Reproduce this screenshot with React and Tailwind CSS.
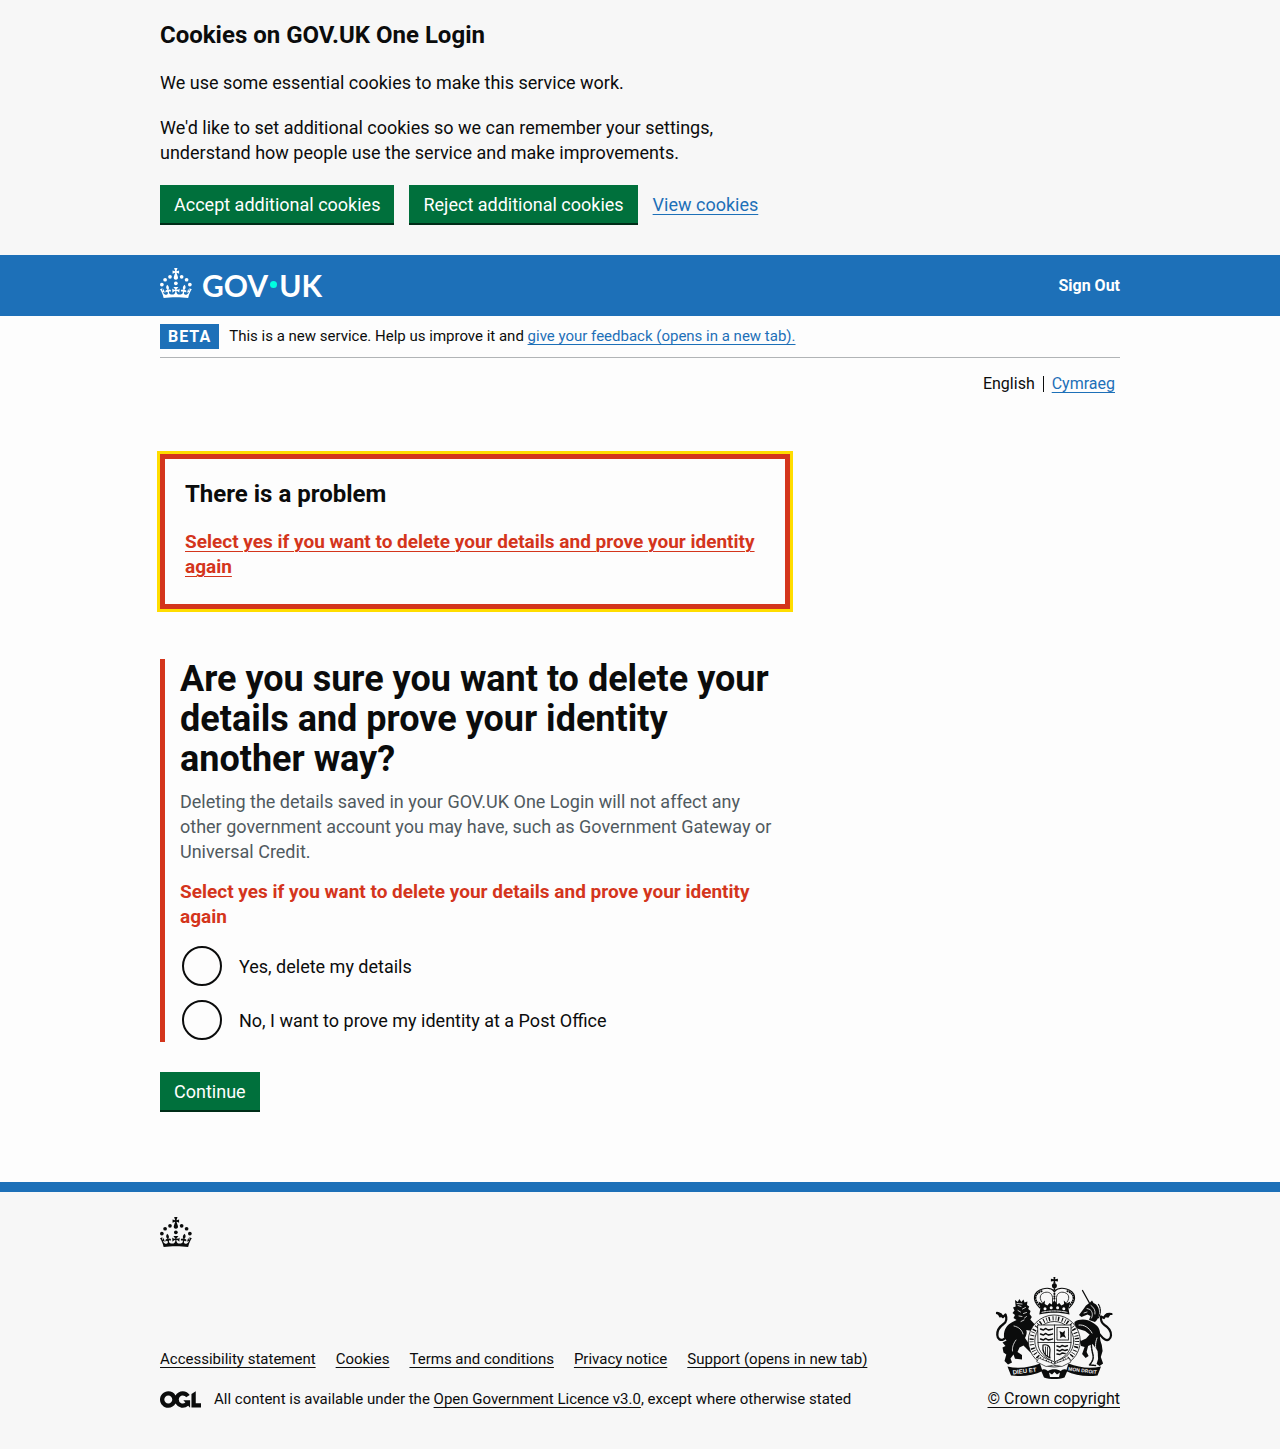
import React from 'react'

const linkBlue = 'text-[#1d70b8] underline decoration-1 underline-offset-[3px]'
const linkDark = 'text-[#0b0c0c] underline decoration-1 underline-offset-[3px]'
const container = 'mx-auto w-full max-w-[960px]'
const button =
  'h-[38px] bg-[#00703c] px-[14px] text-lg leading-[19px] text-white shadow-[0_2px_0_#002d18] cursor-pointer'

function CrownShape() {
  return (
    <g>
      <circle cx="20" cy="17.6" r="3.7" />
      <circle cx="10.2" cy="23.5" r="3.7" />
      <circle cx="3.7" cy="33.2" r="3.7" />
      <circle cx="31.7" cy="30.6" r="3.7" />
      <circle cx="43.3" cy="17.6" r="3.7" />
      <circle cx="53.2" cy="23.5" r="3.7" />
      <circle cx="59.7" cy="33.2" r="3.7" />
      <path d="M33.1,9.8c.2-.1.3-.3.5-.5l4.6,2.4v-6.8l-4.6,1.5c-.1-.2-.3-.3-.5-.5l1.9-5.9h-6.7l1.9,5.9c-.2.1-.3.3-.5.5l-4.6-1.5v6.8l4.6-2.4c.1.2.3.3.5.5l-2.6,8c-.9,2.8,1.2,5.7,4.1,5.7h0c3,0,5.1-2.9,4.1-5.7l-2.6-8ZM37,37.9s-3.4,3.8-4.1,6.1c2.2,0,4.2-.5,6.4-2.8l-.7,8.5c-2-2.8-4.4-4.1-5.7-3.8.1,3.1.5,6.7,5.8,7.2,3.7.3,6.7-1.5,7-3.8.4-2.6-2-4.3-3.7-1.6-1.4-4.5,2.4-6.1,4.9-3.2-1.9-4.5-1.8-7.7,2.4-10.9,3,4,2.6,7.3-1.2,11.1,2.4-1.3,6.2,0,4,4.6-1.2-2.8-3.7-2.2-4.2.2-.3,1.7.7,3.7,3,4.2,1.9.3,4.7-.9,7-5.9-1.3,0-2.4.7-3.9,1.7l2.4-8c.6,2.3,1.4,3.7,2.2,4.5.6-1.6.5-2.8,0-5.3l5,1.8c-2.6,3.6-5.2,8.7-7.3,17.5-7.4-1.1-15.7-1.7-24.5-1.7h0c-8.8,0-17.1.6-24.5,1.7-2.1-8.9-4.7-13.9-7.3-17.5l5-1.8c-.5,2.5-.6,3.7,0,5.3.8-.8,1.6-2.3,2.2-4.5l2.4,8c-1.5-1-2.6-1.7-3.9-1.7,2.3,5,5.2,6.2,7,5.9,2.3-.4,3.3-2.4,3-4.2-.5-2.4-3-3.1-4.2-.2-2.2-4.6,1.6-6,4-4.6-3.7-3.7-4.2-7.1-1.2-11.1,4.2,3.2,4.3,6.4,2.4,10.9,2.5-2.8,6.3-1.3,4.9,3.2-1.8-2.7-4.1-1-3.7,1.6.3,2.3,3.3,4.1,7,3.8,5.4-.5,5.7-4.2,5.8-7.2-1.3-.2-3.7,1-5.7,3.8l-.7-8.5c2.2,2.3,4.2,2.7,6.4,2.8-.7-2.3-4.1-6.1-4.1-6.1h10.6,0Z" />
    </g>
  )
}

function GovUkLogo() {
  return (
    <span className="flex items-start pb-1 font-['Lato',sans-serif] text-[30px] leading-[30px] font-bold">
      <svg width="32" height="30" viewBox="0 0 64 60" fill="currentColor" className="mr-[10px]" aria-hidden="true">
        <CrownShape />
      </svg>
      <span className="flex items-center pt-0.5">
        <span>GOV</span>
        <span className="mx-0.5 size-[7px] rounded-full bg-[#00ffe0]" />
        <span>UK</span>
      </span>
    </span>
  )
}

function OglLogo() {
  return (
    <svg width="41" height="17" viewBox="0 0 483.2 195.7" fill="currentColor" className="mr-[13px] shrink-0" aria-hidden="true">
      <path d="M421.5 142.8V.1l-50.7 32.3v161.1h112.4v-50.7zm-122.3-9.6A47.12 47.12 0 0 1 221 97.8c0-26 21.1-47.1 47.1-47.1 16.7 0 31.4 8.7 39.7 21.8l42.7-27.2A97.63 97.63 0 0 0 268.1 0c-36.5 0-68.3 20.1-85.1 49.7A98 98 0 0 0 97.8 0C43.9 0 0 43.9 0 97.8s43.9 97.8 97.8 97.8c36.5 0 68.3-20.1 85.1-49.7a97.76 97.76 0 0 0 149.6 25.4l19.4 22.2h3v-87.8h-80l24.3 27.5zM97.8 145c-26 0-47.1-21.1-47.1-47.1s21.1-47.1 47.1-47.1 47.1 21.1 47.1 47.1S123.8 145 97.8 145" />
    </svg>
  )
}

function CoatOfArms() {
  return (
    <svg width="124" height="106" viewBox="0 0 124 106" fill="#0b0c0c" stroke="#0b0c0c" strokeLinecap="round" strokeLinejoin="round" strokeWidth="0" aria-hidden="true">
      {/* cross, orb and imperial crown */}
      <path d="M61.400 3h2l-.3 2.300 2.800-.5v2.800l-2.800-.5.4 2.600h-2.200l.4-2.600-2.800.5V4.800l2.800.5z" />
      <circle cx="62.400" cy="11.800" r="2.500" />
      <g fill="none" strokeWidth="1.100">
        <path d="M48 34C39 26 41.500 17.500 50.500 15c5.500-1.500 9.500-.3 11.900 2.300C65 14.700 69 13.500 74.500 15 83.500 17.500 86 26 77 34" />
        <path d="M51.500 30c-5-5-4-10 1-11.500 4-1 7.500.5 8 5V31M73.500 30c5-5 4-10-1-11.500-4-1-7.500.5-8 5V31" strokeWidth=".8" />
        <path d="M46.700 30.500C41 24.500 43.500 18.500 50.500 17M78.300 30.500C84 24.500 81.500 18.500 74.500 17M62.400 15v12" strokeWidth="2" strokeDasharray=".2 2.200" />
      </g>
      <path d="M46.500 27.500l3.500 2 3-3-.3 3.500 2.700 1.500 2.200-2.500 2 1.500 2.800-4.500 2.800 4.500 2-1.500 2.200 2.500 2.700-1.500-.3-3.500 3 3 3.500-2-1.800 7 1 6c-9.500-2.500-20.700-2.500-30.200 0l1-6z" />
      <g fill="#f7f7f7">
        <circle cx="53" cy="34.800" r="1.500" />
        <circle cx="59.200" cy="33.800" r="1.500" />
        <circle cx="65.600" cy="33.800" r="1.500" />
        <circle cx="71.800" cy="34.800" r="1.500" />
      </g>
      <path d="M50 38.300c8-1.800 17-1.800 25 0" fill="none" stroke="#f7f7f7" strokeWidth="1" strokeDasharray="1.500 1" />

      {/* lion: tail, mane, body and legs */}
      <path d="M5 39c3 .3 4.500 2 6 4l2.500-2.500c1.500 4 1 7.500-2 9.500-3.500 2.500-6.500 6-6.200 11 .2 4 3.200 5.800 6 4.500 3-1.300 4.700-4.500 7.200-7" fill="none" strokeWidth="2.300" />
      <path d="M4.500 38l5 1.500 1.500 3.500-3.500.5z" />
      <path d="M23 26l2.800 2 1.500-3 2 3 2.200-2.500 1 3 2.900-1-.4 3.500 2.200 1.500-1 2.500 2.400 2-1 3 2.200 3-1.500 2.500 5 5.500c1 4-1 6-3.500 6l-5.500-1c.8 3 .3 5-1.300 8l5.500 8 5 2v4.500h-5l-7-7-4 2-2 4.500 4.500 3v4.500l-7-.8-1.500-4.200-3 4 1.500 4-4 2-3.500-3.500 1.800-6.500-2.800-2-1-5 3-1.500-3-3.500 4-2-2.500-3.500C11.500 57 14 51 20.500 48l4-2-3-2 1.500-3-2.500-2 2-2.500-1.500-3 2.700-1z" />
      <g fill="none" stroke="#f7f7f7" strokeWidth=".8">
        <path d="M26 31.500l3 1M30.500 35l3-1.500M26 36.500l2.500 1.500M31.500 39.500l3-1M27 42l3 .5M32.500 44l2-1.500M29 47.500l3-1.500M25 29.500l5 .5" />
        <path d="M22 52c5 1 8 4 9 8M24 66c-3 4-4 8-3.500 11" />
      </g>

      {/* unicorn: horn, head, mane, body, legs, tail and chain */}
      <path d="M90.500 16.500L98 30" fill="none" strokeWidth="1.300" />
      <path d="M94 31.500l4-3 2-2 1.500 2.500c4 1.500 6 5.500 5.500 10 .3 3.500-1.500 7-4 9l-6-2 1.500-4-3-1.500-6 2.500-2.500-2 4.500-6z" />
      <g fill="none" stroke="#f7f7f7" strokeWidth=".8">
        <path d="M95 34.500l3 1M99 31.500c3 2 4.500 5 4 8.500M98.500 36c2 2 2.500 5 1 8M92 39l3-1" />
      </g>
      <path d="M106.500 30.500c2.500 4 2.500 9-.5 14" fill="none" strokeWidth="1.200" strokeDasharray="1.500 1" />
      <path d="M82.500 48c5-3.500 13-3 18 .5 5.500 3 8 7 7.500 12.500-.3 4 .8 7 1.800 10l.8 6-1.800 6 2.300 6.500-3.500 2.500-3-2 1.500-5-.5-8-5-7-4.500 2-1.500 6 2 4-3 2-3.500-4 2.500-7-3.500-1-1.500-4.500 6.500-3 3.500-4-4.500-3.500-8-2.500c-2-1.500-3-4-2.600-6z" />
      <path d="M87 51c5-.5 10 2.500 13 8M105 64c-2 5-2 10 0 16" fill="none" stroke="#f7f7f7" strokeWidth=".9" />
      <path d="M119.500 40c-4-.8-6.500 1-7.500 4l-3-1.500c-.5 4 .5 6.500 3.500 8.500 4 2.500 6.800 6 6.500 10.500-.3 3.500-3 5.500-6 4s-4-4-6-6" fill="none" strokeWidth="2.200" />
      <path d="M119.800 39l-5.500.5-2 3.500 4 .8z" />
      <path d="M101 64c-3 6-1 12 0 17s-2 8-3.500 10l6 .5" fill="none" strokeWidth="1.500" strokeDasharray="1.800 1" />

      {/* garter */}
      <circle cx="62.300" cy="67" r="26" fill="#f7f7f7" strokeWidth=".8" />
      <circle cx="62.300" cy="67" r="22.700" fill="none" strokeWidth="4.200" strokeDasharray="1 2.200 .7 1.600 1.400 2.600" strokeLinecap="butt" />
      <circle cx="62.300" cy="67" r="19.500" fill="#f7f7f7" strokeWidth=".8" />
      {/* quartered shield */}
      <path d="M46 51h33v18c0 9-7 15-16.500 19C53 84 46 78 46 69z" fill="#f7f7f7" strokeWidth=".8" />
      <path d="M62.500 51v36M46 68.500h33" fill="none" strokeWidth=".8" />
      <g fill="none" strokeWidth="1.500" strokeDasharray="3 1.200">
        <path d="M48.500 55l3 1 2-1.500 3 1.500 4-1M48.500 60l3 1 2-1.500 3 1.500 4-1M48.500 65l3 1 2-1.500 3 1.500 4-1" />
        <path d="M65 80l3 .5 2-1.500 3 .5M65 76l3 1 2-1.500 3 1 3-1M65 72l3 1 2-1.500 3 1 3-1" />
      </g>
      <path d="M65 53.500h11.500v12.500H65z" fill="none" strokeWidth=".8" strokeDasharray="1 .6" />
      <path d="M67.500 57l3 1.500 2.500-2-.5 4 1.500 3.500-3-1.500-3 1.500.5-3z" />
      <path d="M51 71c4-1 7 1 7 4.500S57 82 58 84c-5-2-8-6-7-13z" fill="none" strokeWidth="1.200" />
      <path d="M53.500 73v7M55.500 73v9" fill="none" strokeWidth=".8" />
      <path d="M47 84c5 2.500 10 4 15 6 5-2 10-3.500 15-6l2 4-9 4.500-8-1.500-8 1.500-9-4.500z" fill="#f7f7f7" strokeWidth=".6" />

      {/* motto scroll and compartment */}
      <path d="M15.500 92.500c11 2.500 22.500 1 32.500-3l2.500 7.500c-9 4.500-20 6-31.500 4.500z" />
      <path d="M109 92.500c-11 2.500-22.500 1-32.500-3L74 97c9 4.500 20 6 31.500 4.500z" />
      <path d="M49 96.500c3-2.500 5-1 7 .5 3-2.500 9.500-2.500 12.500 0 2-1.500 4-3 7-.5l-3 7c-6.500 2-14 2-20.500 0z" />
      <path d="M57 98.500l3 2 2.500-2.500 2.500 2.500 3-2-1 4.500H58z" fill="#f7f7f7" />
      <g fill="#f7f7f7" fontFamily="Liberation Sans, sans-serif" fontWeight="700">
        <text x="21" y="100.500" fontSize="6" transform="rotate(-7 21 100)">DIEU ET</text>
        <text x="76" y="96.500" fontSize="5" transform="rotate(7 76 97)">MON DROIT</text>
      </g>
    </svg>
  )
}

function CookieBanner() {
  return (
    <section aria-label="Cookies on GOV.UK One Login" className="bg-[#f7f7f7] pt-5 pb-8">
      <div className={container}>
        <div className="max-w-[630px]">
          <h2 className="mb-5 text-2xl leading-[30px] font-bold">Cookies on GOV.UK One Login</h2>
          <p className="mb-5">We use some essential cookies to make this service work.</p>
          <p className="mb-5">
            We'd like to set additional cookies so we can remember your settings, understand how people use the service and make improvements.
          </p>
        </div>
        <div className="flex flex-wrap items-center gap-[15px]">
          <button type="button" className={button}>Accept additional cookies</button>
          <button type="button" className={button}>Reject additional cookies</button>
          <a href="#cookies" className={linkBlue}>View cookies</a>
        </div>
      </div>
    </section>
  )
}

function Header() {
  return (
    <header className="bg-[#1d70b8] text-white">
      <div className={`${container} flex h-[61px] items-center justify-between`}>
        <a href="#home" aria-label="GOV.UK" className="block"><GovUkLogo /></a>
        <a href="#sign-out" className="text-base leading-5 font-bold">Sign Out</a>
      </div>
    </header>
  )
}

function PhaseBanner() {
  return (
    <div className="flex items-center border-b border-[#b1b4b6] py-2 text-[15px] leading-[25px]">
      <strong className="mr-[10px] bg-[#1d70b8] px-2 text-base leading-[25px] font-bold tracking-[1px] text-white">BETA</strong>
      <span>
        This is a new service. Help us improve it and <a href="#feedback" className={linkBlue}>give your feedback (opens in a new tab).</a>
      </span>
    </div>
  )
}

function LanguageSelect() {
  return (
    <nav aria-label="Choose a language" className="mt-4 flex items-center justify-end pr-[5px] text-base leading-5">
      <span className="pr-2">English</span>
      <span className="h-4 w-px bg-[#0b0c0c]" />
      <a href="#cy" className={`${linkBlue} ml-2`}>Cymraeg</a>
    </nav>
  )
}

function Radio({ id, children }) {
  return (
    <div className="flex min-h-11 items-center pl-0.5">
      <input
        id={id}
        type="radio"
        name="deleteDetails"
        className="size-10 shrink-0 appearance-none rounded-full border-2 border-[#0b0c0c] checked:shadow-[inset_0_0_0_8px_#fdfdfd] checked:bg-[#0b0c0c]"
      />
      <label htmlFor={id} className="pl-[17px] leading-[25px]">{children}</label>
    </div>
  )
}

function Footer() {
  const links = ['Accessibility statement', 'Cookies', 'Terms and conditions', 'Privacy notice', 'Support (opens in new tab)']
  return (
    <footer className="border-t-[10px] border-[#1d70b8] bg-[#f7f7f7] pt-[25px] pb-10 text-[15px] leading-5">
      <div className={container}>
        <svg width="32" height="30" viewBox="0 0 64 60" fill="#0b0c0c" aria-hidden="true"><CrownShape /></svg>
        <div className="mt-[27px] flex items-end justify-between">
          <div>
            <ul className="mb-5 flex flex-wrap gap-x-5">
              {links.map((l) => (
                <li key={l}><a href="#footer" className={linkDark}>{l}</a></li>
              ))}
            </ul>
            <div className="flex items-center">
              <OglLogo />
              <span>
                All content is available under the <a href="#ogl" className={linkDark}>Open Government Licence v3.0</a>, except where otherwise stated
              </span>
            </div>
          </div>
          <a href="#copyright" className={`${linkDark} flex flex-col items-center text-base leading-5`}>
            <span className="mb-[9px]"><CoatOfArms /></span>
            © Crown copyright
          </a>
        </div>
      </div>
    </footer>
  )
}

export default function App() {
  return (
    <div className="min-h-screen bg-[#fdfdfd] font-['Roboto',sans-serif] text-lg leading-[25px] text-[#0b0c0c]">
      <CookieBanner />
      <Header />
      <div className={container}>
        <PhaseBanner />
        <LanguageSelect />
        <main className="max-w-[630px] pt-[60px] pb-[72px]">
          <div role="alert" className="mb-[50px] border-5 border-[#d4351c] p-5 pb-[25px] outline-3 outline-[#ffdd00]">
            <h2 className="mb-5 text-2xl leading-[30px] font-bold">There is a problem</h2>
            <a href="#yes" className="text-[19px] leading-[25px] font-bold text-[#d4351c] underline decoration-1 underline-offset-[3px]">
              Select yes if you want to delete your details and prove your identity again
            </a>
          </div>
          <form onSubmit={(e) => e.preventDefault()}>
            <div className="border-l-5 border-[#d4351c] pl-[15px]">
              <fieldset aria-describedby="hint error">
                <legend>
                  <h1 className="mb-[10px] text-4xl leading-10 font-bold">
                    Are you sure you want to delete your details and prove your identity another way?
                  </h1>
                </legend>
                <div id="hint" className="mb-[15px] pr-[10px] text-[#505a5f]">
                  Deleting the details saved in your GOV.UK One Login will not affect any other government account you may have, such as Government Gateway or Universal Credit.
                </div>
                <p id="error" className="mb-[15px] text-[19px] leading-[25px] font-bold text-[#d4351c]">
                  Select yes if you want to delete your details and prove your identity again
                </p>
                <div className="flex flex-col gap-[10px]">
                  <Radio id="yes">Yes, delete my details</Radio>
                  <Radio id="no">No, I want to prove my identity at a Post Office</Radio>
                </div>
              </fieldset>
            </div>
            <button type="submit" className={`${button} mt-[30px] block`}>Continue</button>
          </form>
        </main>
      </div>
      <Footer />
    </div>
  )
}
